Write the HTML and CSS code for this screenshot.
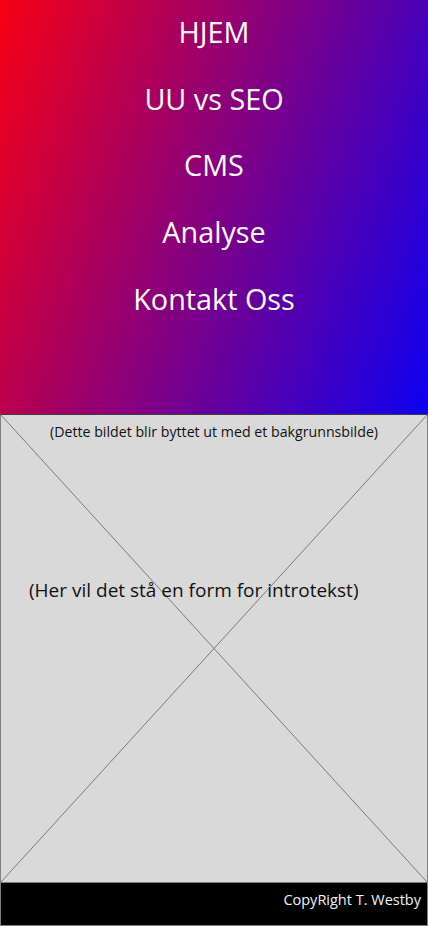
FILE: index.html
```html
<!DOCTYPE html>
<html lang="no">
<head>
<meta charset="utf-8">
<title>Forside</title>
<link rel="stylesheet" href="styles.css">
</head>
<body>
<header class="top">
  <nav class="menu">
    <a class="menu-item" href="#">HJEM</a>
    <a class="menu-item" href="#">UU vs SEO</a>
    <a class="menu-item" href="#">CMS</a>
    <a class="menu-item" href="#">Analyse</a>
    <a class="menu-item" href="#">Kontakt Oss</a>
  </nav>
</header>
<section class="hero">
  <svg class="hero-x" viewBox="0 0 100 100" preserveAspectRatio="none" aria-hidden="true">
    <line x1="0" y1="0" x2="100" y2="100" vector-effect="non-scaling-stroke"/>
    <line x1="100" y1="0" x2="0" y2="100" vector-effect="non-scaling-stroke"/>
  </svg>
  <p class="hero-note">(Dette bildet blir byttet ut med et bakgrunnsbilde)</p>
  <p class="hero-intro">(Her vil det stå en form for introtekst)</p>
</section>
<footer class="foot">
  <p class="foot-text">CopyRight T. Westby</p>
</footer>
</body>
</html>
```
FILE: styles.css
```css
* { box-sizing: border-box; }
html, body { margin: 0; padding: 0; }
body {
  width: 428px;
  font-family: "Open Sans", "Noto Sans", sans-serif;
  background: #ffffff;
}
.top {
  height: 414px;
  background: linear-gradient(110deg, #f70014, #0d00f2);
}
.menu {
  display: flex;
  flex-direction: column;
  align-items: center;
  padding-top: 13px;
  gap: 28.7px;
}
.menu-item {
  color: #ffffff;
  text-decoration: none;
  font-size: 28.8px;
  line-height: 38px;
}
.hero {
  position: relative;
  height: 468px;
  background: #d9d9d9;
  border: 1px solid #7f7f7f;
  border-top-color: #3c3c3c;
  border-bottom: none;
}
.hero-x {
  position: absolute;
  inset: 0;
  width: 100%;
  height: 100%;
}
.hero-x line {
  stroke: #7a7a7a;
  stroke-width: 1;
}
.hero-note {
  position: relative;
  margin: 0;
  padding-top: 8px;
  text-align: center;
  font-size: 14.2px;
  line-height: 18px;
  color: #111111;
}
.hero-intro {
  position: relative;
  margin: 0;
  padding: 136px 0 0 28px;
  font-size: 19px;
  line-height: 26px;
  color: #111111;
}
.foot {
  height: 44px;
  background: #000000;
  border: 1px solid #7f7f7f;
  display: flex;
  align-items: flex-start;
  justify-content: flex-end;
  padding: 7px 6px 0 0;
}
.foot-text {
  margin: 0;
  color: #f2f2f2;
  font-size: 14.5px;
  line-height: 20px;
}
```
